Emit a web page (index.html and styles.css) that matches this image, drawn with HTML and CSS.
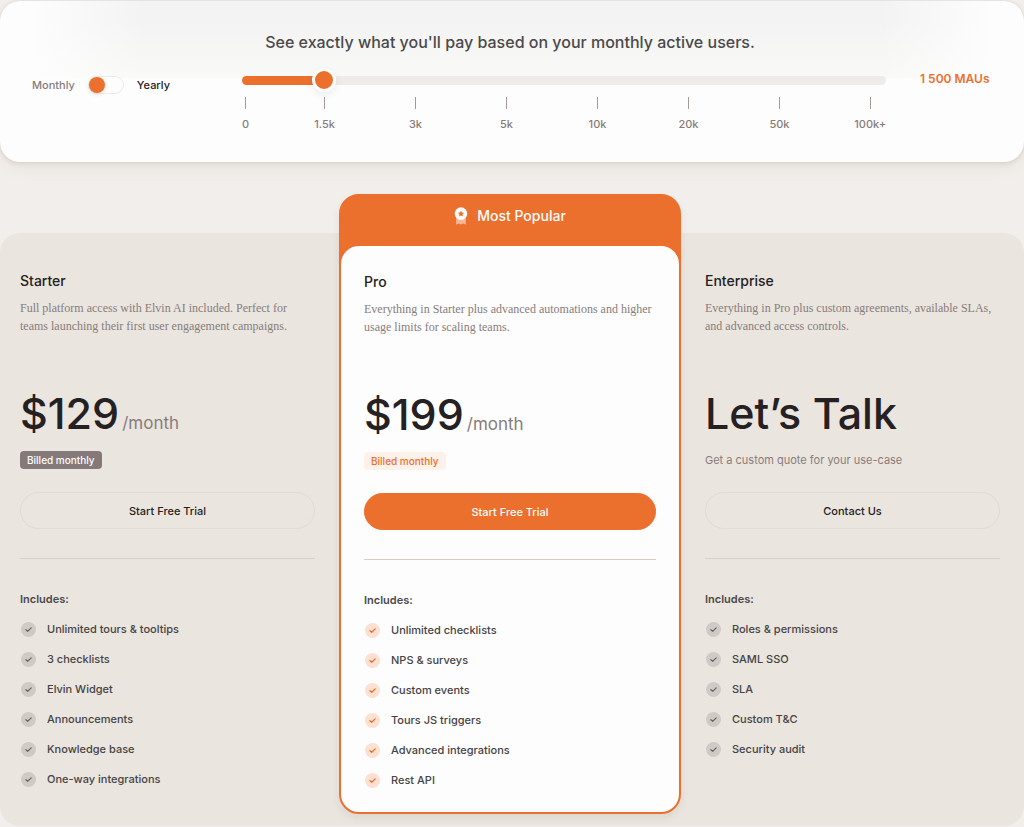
FILE: index.html
```html
<!DOCTYPE html>
<html lang="en">
<head>
<meta charset="utf-8">
<meta name="viewport" content="width=device-width, initial-scale=1">
<title>Pricing</title>
<link rel="stylesheet" href="styles.css">
</head>
<body>
<svg class="sprite" aria-hidden="true">
  <symbol id="check" viewBox="0 0 15 15">
    <circle class="check-disc" cx="7.5" cy="7.5" r="7.5"/>
    <path class="check-mark" d="M4.9 7.7 6.7 9.3 10.2 5.9"/>
  </symbol>
</svg>

<section class="calculator">
  <h1 class="calculator-title">See exactly what you'll pay based on your monthly active users.</h1>
  <div class="calculator-row">
    <div class="billing">
      <label class="billing-off" for="yearly">Monthly</label>
      <input class="switch" type="checkbox" role="switch" id="yearly">
      <label class="billing-on" for="yearly">Yearly</label>
    </div>
    <div class="usage">
      <input class="slider" type="range" min="0" max="1000" value="113" aria-label="Monthly active users">
      <ol class="scale">
        <li>0</li><li>1.5k</li><li>3k</li><li>5k</li><li>10k</li><li>20k</li><li>50k</li><li>100k+</li>
      </ol>
    </div>
    <output class="mau">1 500 MAUs</output>
  </div>
</section>

<main class="plans">
  <article class="plan">
    <h2 class="plan-name">Starter</h2>
    <p class="plan-text">Full platform access with Elvin AI included. Perfect for teams launching their first user engagement campaigns.</p>
    <p class="price">$129<span class="period">/month</span></p>
    <p class="note"><span class="tag">Billed monthly</span></p>
    <button class="button" type="button">Start Free Trial</button>
    <hr class="rule">
    <h3 class="includes">Includes:</h3>
    <ul class="features">
      <li><svg class="check"><use href="#check"/></svg>Unlimited tours &amp; tooltips</li>
      <li><svg class="check"><use href="#check"/></svg>3 checklists</li>
      <li><svg class="check"><use href="#check"/></svg>Elvin Widget</li>
      <li><svg class="check"><use href="#check"/></svg>Announcements</li>
      <li><svg class="check"><use href="#check"/></svg>Knowledge base</li>
      <li><svg class="check"><use href="#check"/></svg>One-way integrations</li>
    </ul>
  </article>

  <div class="popular">
    <p class="banner">
      <svg class="medal" viewBox="0 0 14 18" aria-hidden="true">
        <path class="medal-ribbon" d="M2.2 9.5h9.6v8.2L9.6 16.6 7 17.5 4.4 16.6 2.2 17.7z"/>
        <circle class="medal-disc" cx="7" cy="6.6" r="6.3"/>
        <path class="medal-star" d="M7 3.4 8 5.4 10.1 5.7 8.6 7.3 8.9 9.4 7 8.4 5.1 9.4 5.4 7.3 3.9 5.7 6 5.4z"/>
      </svg>
      Most Popular
    </p>
    <article class="plan plan-pro">
      <h2 class="plan-name">Pro</h2>
      <p class="plan-text">Everything in Starter plus advanced automations and higher usage limits for scaling teams.</p>
      <p class="price">$199<span class="period">/month</span></p>
      <p class="note"><span class="tag">Billed monthly</span></p>
      <button class="button" type="button">Start Free Trial</button>
      <hr class="rule">
      <h3 class="includes">Includes:</h3>
      <ul class="features">
        <li><svg class="check"><use href="#check"/></svg>Unlimited checklists</li>
        <li><svg class="check"><use href="#check"/></svg>NPS &amp; surveys</li>
        <li><svg class="check"><use href="#check"/></svg>Custom events</li>
        <li><svg class="check"><use href="#check"/></svg>Tours JS triggers</li>
        <li><svg class="check"><use href="#check"/></svg>Advanced integrations</li>
        <li><svg class="check"><use href="#check"/></svg>Rest API</li>
      </ul>
    </article>
  </div>

  <article class="plan">
    <h2 class="plan-name">Enterprise</h2>
    <p class="plan-text">Everything in Pro plus custom agreements, available SLAs, and advanced access controls.</p>
    <p class="price">Let’s Talk</p>
    <p class="note">Get a custom quote for your use-case</p>
    <button class="button" type="button">Contact Us</button>
    <hr class="rule">
    <h3 class="includes">Includes:</h3>
    <ul class="features">
      <li><svg class="check"><use href="#check"/></svg>Roles &amp; permissions</li>
      <li><svg class="check"><use href="#check"/></svg>SAML SSO</li>
      <li><svg class="check"><use href="#check"/></svg>SLA</li>
      <li><svg class="check"><use href="#check"/></svg>Custom T&amp;C</li>
      <li><svg class="check"><use href="#check"/></svg>Security audit</li>
    </ul>
  </article>
</main>
</body>
</html>
```
FILE: styles.css
```css
:root {
  --orange: #ec702d;
  --ink: #252021;
  --body: #454344;
  --muted: #887c7b;
  --sand: #eae5df;
  --paper: #fdfdfd;
}

* { box-sizing: border-box; margin: 0; padding: 0; }

body {
  padding-top: 1px;
  background: #f1eeeb;
  color: var(--ink);
  font: 500 11px/20px Inter, "Liberation Sans", sans-serif;
}

ol, ul { list-style: none; }
.sprite { display: none; }

.calculator {
  padding: 31px 36px 28px 32px;
  border-radius: 20px;
  background:
    linear-gradient(to right, var(--paper) 3%, transparent 14%, transparent 86%, var(--paper) 97%) 0 0 / 100% 77px no-repeat,
    linear-gradient(#f3f3f3 20px, #f9f9f7) 0 0 / 100% 77px no-repeat,
    var(--paper);
  box-shadow: 0 0 2px #d9cdc4, 0 2px 4px #ddd7d1, 0 8px 12px #ebe5df;
}

.calculator-title {
  color: #4b494a;
  font-size: 16px;
  font-weight: 500;
  line-height: 20px;
  text-align: center;
}

.calculator-row {
  display: grid;
  grid-template-columns: 176px minmax(0, 1fr) 68px;
  gap: 34px;
  margin-top: 16px;
}

.billing {
  display: flex;
  align-items: center;
  gap: 13px;
  height: 34px;
}
.billing-off { color: var(--muted); }

.switch {
  appearance: none;
  display: flex;
  align-items: center;
  width: 36px;
  height: 18px;
  border: 1px solid #eeebe8;
  border-radius: 9px;
  background: var(--paper);
}
.switch::before {
  content: "";
  width: 16px;
  height: 16px;
  border-radius: 50%;
  background: var(--orange);
  box-shadow: 0 1px 4px #0002;
}
.switch:checked { justify-content: flex-end; }

.slider {
  appearance: none;
  display: block;
  width: 100%;
  height: 24px;
  background: none;
}
.slider::-webkit-slider-runnable-track {
  height: 9px;
  border-radius: 5px;
  background: linear-gradient(to right, var(--orange) 12%, #efebe8 12%);
}
.slider::-webkit-slider-thumb {
  appearance: none;
  width: 24px;
  height: 24px;
  margin-top: -8px;
  border: 3px solid var(--paper);
  border-radius: 50%;
  background: var(--orange);
  box-shadow: 0 3px 8px #0001;
}

.scale {
  display: grid;
  grid-template-columns: 37fr repeat(6, 91fr) 61fr;
  margin-top: 5px;
  color: var(--muted);
}
.scale li {
  display: flex;
  flex-direction: column;
  align-items: center;
  justify-self: center;
  gap: 5px;
}
.scale li:first-child { justify-self: start; }
.scale li:last-child { justify-self: end; }
.scale li::before {
  content: "";
  width: 1px;
  height: 12px;
  background: #a39a98;
}

.mau {
  margin-top: 1px;
  color: var(--orange);
  font-size: 12px;
  font-weight: 600;
  white-space: nowrap;
}

.plans {
  display: grid;
  grid-template-columns: 339fr 342fr 343fr;
  margin-top: 71px;
  border-radius: 20px;
  background: var(--sand);
}

.plan { padding: 38px 24px 36px 20px; }
.plan:last-child { padding-left: 24px; }

.popular {
  margin: -39px 0 12px;
  border: 2px solid var(--orange);
  border-radius: 20px;
  background: var(--orange);
  box-shadow: 0 4px 10px #0001;
}
.banner {
  display: flex;
  justify-content: center;
  gap: 9px;
  padding: 10px 0 20px;
  color: var(--paper);
  font-size: 14px;
}
.medal { width: 14px; height: 18px; margin-top: 1px; }
.medal-ribbon { fill: #f6b795; }
.medal-disc { fill: var(--paper); }
.medal-star { fill: var(--orange); }

.popular .plan-pro {
  padding: 26px 23px 22px;
  border-radius: 18px;
  background: var(--paper);
}

.plan-name { font-size: 14px; font-weight: 500; line-height: 20px; }
.plan-text {
  min-height: 36px;
  margin-top: 8px;
  color: var(--muted);
  font: 12px/18px "Liberation Serif", serif;
}
.price {
  margin-top: 48px;
  font-size: 43px;
  line-height: 60px;
  white-space: nowrap;
}
.period {
  margin-left: 3px;
  color: var(--muted);
  font-size: 17px;
  font-weight: 400;
  line-height: 20px;
}
.note {
  height: 18px;
  margin-top: 8px;
  color: var(--muted);
  font-weight: 400;
  line-height: 18px;
}
.tag {
  display: block;
  width: fit-content;
  padding: 0 7px;
  border-radius: 4px;
  background: #857979;
  color: var(--paper);
  font-size: 10px;
  font-weight: 500;
}
.plan-pro .tag { background: #fdf1e9; color: var(--orange); }

.button {
  width: 100%;
  height: 37px;
  margin-top: 23px;
  border: 1px solid #e0dbd5;
  border-radius: 19px;
  background: none;
  color: var(--ink);
  font: inherit;
}
.plan-pro .button { border-color: var(--orange); background: var(--orange); color: var(--paper); }

.rule {
  height: 1px;
  margin: 29px 0 30px;
  border: 0;
  background: #d5d0cc;
}
.plan-pro .rule { background: #d9cdbd; }

.includes { color: #4b494a; font-size: 11px; font-weight: 600; line-height: 20px; }
.features {
  display: grid;
  align-content: start;
  gap: 10px;
  margin-top: 10px;
  color: var(--body);
}
.features li { display: flex; align-items: center; gap: 11px; padding-left: 1px; }
.check { flex: none; width: 15px; height: 15px; }
.plan-pro .check { --disc: #fce0d2; --mark: var(--orange); }
.check-disc { fill: var(--disc, #d0cac6); }
.check-mark {
  fill: none;
  stroke: var(--mark, #6f6665);
  stroke-width: 1.3;
  stroke-linecap: round;
  stroke-linejoin: round;
}
```
